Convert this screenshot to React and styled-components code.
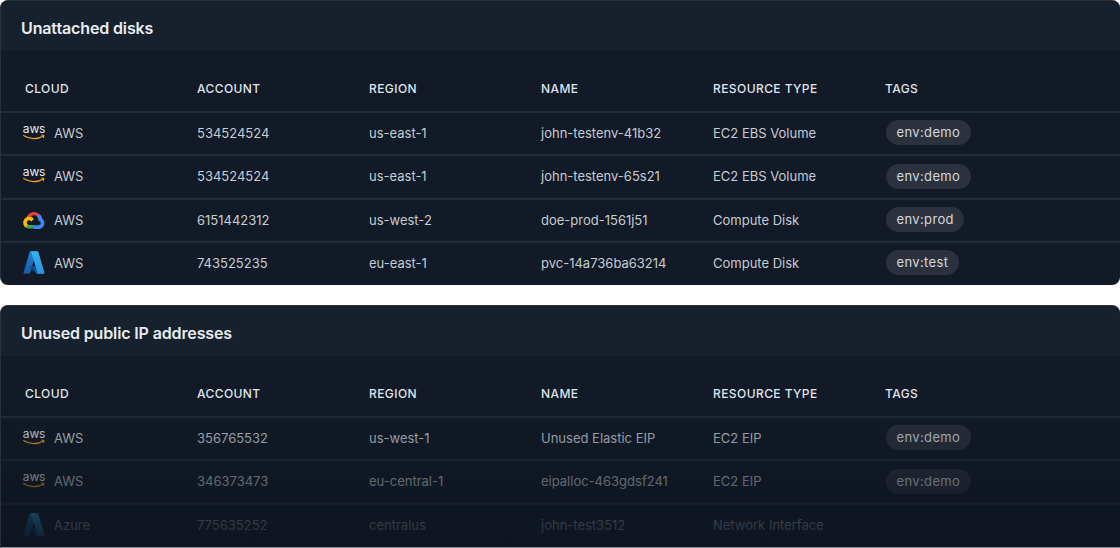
import React from "react";
import styled, { createGlobalStyle } from "styled-components";

const Global = createGlobalStyle`
  html, body { margin: 0; padding: 0; background: #fff; }
  body { font-family: Inter, "Liberation Sans", sans-serif; -webkit-font-smoothing: antialiased; }
`;

const Page = styled.div`
  width: 1120px;
  height: 548px;
  overflow: hidden;
  display: flex;
  flex-direction: column;
  gap: 20px;
`;

const Card = styled.section`
  position: relative;
  flex: none;
  box-sizing: border-box;
  height: ${(p) => p.$height}px;
  overflow: hidden;
  background: #111a26;
  border-radius: 8px;
  border: 1px solid #2c3138;
  border-width: 1px 0 0 1px;
  ${(p) => p.$fade && "border-radius: 8px 8px 0 0; border-bottom: 1px solid #8f9399;"}
`;

const CardHeader = styled.header`
  box-sizing: border-box;
  height: 50px;
  padding: 3px 0 0 20px;
  display: flex;
  align-items: center;
  background: #17212e;
`;

const Title = styled.h2`
  margin: 0;
  font-size: 16px;
  line-height: 24px;
  font-weight: 600;
  letter-spacing: -0.13px;
  color: #e8ecf1;
`;

const Grid = styled.div`
  display: grid;
  grid-template-columns: 172px 172px 172px 172px 172px 1fr;
  padding-left: 24px;
  align-items: center;
  border-bottom: 2px solid #232c38;
`;

const HeadRow = styled(Grid)`
  height: 60px;
`;

const Row = styled(Grid)`
  box-sizing: border-box;
  height: 43.33px;
  padding-bottom: 1.5px;
  &:last-child { border-bottom: 0; padding-bottom: 3.5px; }
`;

const HeadCell = styled.div`
  font-size: 12px;
  font-weight: 500;
  letter-spacing: 0.42px;
  color: #dfe5ec;
  padding-top: 14px;
`;

const Cell = styled.div`
  font-size: 13px;
  line-height: 20px;
  color: #c6ccd4;
  white-space: nowrap;
`;

const CloudCell = styled(Cell)`
  display: flex;
  align-items: center;
  gap: 9px;
  margin-left: -2px;
`;

const LogoBox = styled.span`
  width: 22px;
  height: 24px;
  display: flex;
  align-items: center;
  justify-content: center;
  flex: none;
`;

const Tag = styled.span`
  display: inline-block;
  height: 25px;
  line-height: 25px;
  margin-left: 1px;
  padding: 0 10.5px;
  border-radius: 13px;
  background: #2c323d;
  color: #d3d8de;
  font-size: 13px;
  letter-spacing: 0.36px;
`;

const Fade = styled.div`
  position: absolute;
  left: 0;
  right: 0;
  bottom: 0;
  height: 150px;
  background: linear-gradient(to bottom, rgba(14,21,32,0) 0%, rgba(14,21,32,0.45) 45%, rgba(14,21,32,0.93) 100%);
  pointer-events: none;
`;

const AwsLogo = () => (
  <svg width="24" height="18" viewBox="0 0 24 18" aria-hidden="true" style={{ overflow: "visible" }}>
    <text x="12" y="9.400" textAnchor="middle" fontFamily="Inter, sans-serif" fontSize="12" fontWeight="400" letterSpacing="-0.2" fill="#e7e9ec">aws</text>
    <path d="M1.600 11.600C7 15.400 16 15.600 21.400 12" fill="none" stroke="#f5a11d" strokeWidth="1.200" strokeLinecap="round" />
    <path d="M19.600 11.100l2.500.3-.7 2.300" fill="none" stroke="#f5a11d" strokeWidth="1" strokeLinecap="round" strokeLinejoin="round" />
  </svg>
);

const GcpLogo = () => (
  <svg width="22" height="18" viewBox="0 0 22 18" aria-hidden="true">
    <path d="M14.200 5.600l1.800-1.800.1-.8C13 0 8 .3 5.200 3.600 4.400 4.500 3.800 5.600 3.500 6.700l.7-.1 3.700-.6.3-.3C9.800 3.900 12.500 3.700 14.200 5.600z" fill="#ea4335" />
    <path d="M19.200 7c-.5-1.600-1.500-3.100-2.900-4.100l-2.600 2.600c1.100.9 1.800 2.300 1.700 3.700v.5c1.300 0 2.300 1 2.300 2.300 0 1.300-1 2.300-2.300 2.300h-4.600l-.5.5v2.800l.5.5h4.600c3.300 0 6-2.600 6-5.900 0-1.900-.9-3.700-2.200-4.700z" fill="#4285f4" />
    <path d="M6.200 17.600h4.600v-3.700H6.200c-.3 0-.7-.1-1-.2l-.6.2L2.700 15.700l-.2.6c1 .8 2.300 1.300 3.700 1.300z" fill="#34a853" />
    <path d="M6.200 5.700C2.900 5.700.2 8.400.2 11.700c0 1.900.9 3.600 2.300 4.700l2.700-2.700c-1.200-.5-1.700-1.900-1.200-3 .5-1.200 1.900-1.700 3-1.200.5.200 1 .7 1.200 1.200l2.700-2.700C9.800 6.500 8 5.700 6.200 5.700z" fill="#fbbc05" />
  </svg>
);

const AzureLogo = () => (
  <svg width="22" height="23" viewBox="0 0 22 21" preserveAspectRatio="none" aria-hidden="true">
    <defs>
      <linearGradient id="az1" x1="0.6" y1="0" x2="0.2" y2="1">
        <stop offset="0" stopColor="#2a7fd0" />
        <stop offset="1" stopColor="#0f5da8" />
      </linearGradient>
      <linearGradient id="az2" x1="0.3" y1="0" x2="0.7" y2="1">
        <stop offset="0" stopColor="#36b6ee" />
        <stop offset="1" stopColor="#2b94e0" />
      </linearGradient>
    </defs>
    <path d="M7.400.2h6.300L7 20.200c-.1.300-.4.600-.8.600H1.300c-.6 0-1-.6-.8-1.100L6.600.8c.1-.3.400-.6.800-.6z" fill="url(#az1)" />
    <path d="M16.600 13.800H6.500c-.3 0-.4.300-.2.500l6.500 6.100c.2.200.4.300.7.300h5.700z" fill="#0e4f94" />
    <path d="M15.300.8c-.1-.3-.4-.6-.8-.6H7.500c.4 0 .7.300.8.600l6.100 18.900c.2.500-.2 1.100-.8 1.100h7c.6 0 1-.6.8-1.100z" fill="url(#az2)" />
  </svg>
);

const logos = { aws: AwsLogo, gcp: GcpLogo, azure: AzureLogo };
const columns = ["CLOUD", "ACCOUNT", "REGION", "NAME", "RESOURCE TYPE", "TAGS"];

const disks = [
  { logo: "aws", cloud: "AWS", account: "534524524", region: "us-east-1", name: "john-testenv-41b32", type: "EC2 EBS Volume", tag: "env:demo" },
  { logo: "aws", cloud: "AWS", account: "534524524", region: "us-east-1", name: "john-testenv-65s21", type: "EC2 EBS Volume", tag: "env:demo" },
  { logo: "gcp", cloud: "AWS", account: "6151442312", region: "us-west-2", name: "doe-prod-1561j51", type: "Compute Disk", tag: "env:prod" },
  { logo: "azure", cloud: "AWS", account: "743525235", region: "eu-east-1", name: "pvc-14a736ba63214", type: "Compute Disk", tag: "env:test" },
];

const ips = [
  { logo: "aws", cloud: "AWS", account: "356765532", region: "us-west-1", name: "Unused Elastic EIP", type: "EC2 EIP", tag: "env:demo" },
  { logo: "aws", cloud: "AWS", account: "346373473", region: "eu-central-1", name: "eipalloc-463gdsf241", type: "EC2 EIP", tag: "env:demo" },
  { logo: "azure", cloud: "Azure", account: "775635252", region: "centralus", name: "john-test3512", type: "Network Interface" },
];

function DataCard({ title, rows, height, fade }) {
  return (
    <Card $height={height} $fade={fade}>
      <CardHeader><Title>{title}</Title></CardHeader>
      <HeadRow>
        {columns.map((c) => <HeadCell key={c}>{c}</HeadCell>)}
      </HeadRow>
      {rows.map((r, i) => {
        const Logo = logos[r.logo];
        return (
          <Row key={i}>
            <CloudCell><LogoBox><Logo /></LogoBox>{r.cloud}</CloudCell>
            <Cell>{r.account}</Cell>
            <Cell>{r.region}</Cell>
            <Cell>{r.name}</Cell>
            <Cell>{r.type}</Cell>
            <Cell>{r.tag && <Tag>{r.tag}</Tag>}</Cell>
          </Row>
        );
      })}
      {fade && <Fade />}
    </Card>
  );
}

export default function App() {
  return (
    <>
      <Global />
      <Page>
        <DataCard title="Unattached disks" rows={disks} height={285} />
        <DataCard title="Unused public IP addresses" rows={ips} height={243} fade />
      </Page>
    </>
  );
}
